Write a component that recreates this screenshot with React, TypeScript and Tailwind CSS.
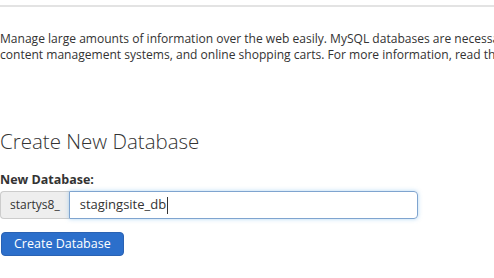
import React from "react";

export default function App() {
  return (
    <div className="w-[494px] h-[278px] overflow-hidden bg-white text-[#333]" style={{ fontFamily: '"Open Sans", sans-serif' }}>
      <div className="pt-[5px]">
        <div className="h-[2px] bg-[#e3e3e3] w-[700px]" />
      </div>
      <p className="mt-[24px] text-[12.05px] leading-[16px] whitespace-nowrap">
        Manage large amounts of information over the web easily. MySQL databases are necessary to run many web-based applications, such as bulletin boards,
        <br />
        content management systems, and online shopping carts. For more information, read the documentation.
      </p>
      <h2 className="mt-[65px] text-[20.5px] leading-[26px] font-light text-[#333]">Create New Database</h2>
      <div className="mt-[18px] text-[12.5px] leading-[16px] font-bold">New Database:</div>
      <div className="mt-[3px] flex w-[418px] h-[28px]">
        <div className="flex items-center px-[9px] bg-[#eeeeee] border border-[#cccccc] border-r-0 rounded-l-[4px] text-[12px]">
          startys8_
        </div>
        <div className="flex-1 flex items-center px-[10px] border border-[#7fa4cf] rounded-r-[4px] shadow-[0_0_4px_rgba(102,175,233,0.5)] text-[13px]">
          stagingsite_db<span className="inline-block w-px h-[17px] bg-[#333] ml-[1px]" />
        </div>
      </div>
      <button className="mt-[13px] ml-[1px] h-[24px] px-[12px] bg-[#2c6fcb] border border-[#2a62b3] rounded-[4px] text-white text-[12.5px] leading-[16px]">
        Create Database
      </button>
    </div>
  );
}
